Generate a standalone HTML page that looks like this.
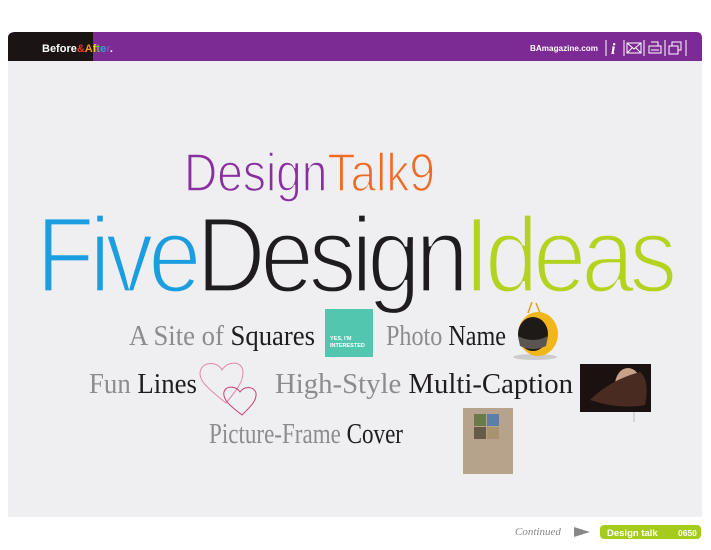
<!DOCTYPE html>
<html><head><meta charset="utf-8"><style>
html,body{margin:0;padding:0;background:#fff;width:711px;height:550px;overflow:hidden}
svg{display:block}
</style></head><body>
<svg width="711" height="550" viewBox="0 0 711 550" xmlns="http://www.w3.org/2000/svg">
<rect width="711" height="550" fill="#fff"/>
<!-- header -->
<path d="M16,32 H696 Q702,32 702,38 V61 H8 V38 Q8,32 16,32Z" fill="#7c2a94"/>
<path d="M16,32 H93 V61 H8 V38 Q8,32 16,32Z" fill="#1a1414"/>
<text x="42" y="52" font-family="Liberation Sans" font-weight="bold" font-size="11" fill="#fff">Before<tspan fill="#e23b2a">&amp;</tspan><tspan fill="#f39a1e">A</tspan><tspan fill="#e8d01f">f</tspan><tspan fill="#5cbf3a">t</tspan><tspan fill="#2fa0dc">e</tspan><tspan fill="#8c4bb0">r</tspan><tspan fill="#fff">.</tspan></text>
<text x="530" y="51" font-family="Liberation Sans" font-weight="bold" font-size="8.5" fill="#fff" textLength="68" lengthAdjust="spacingAndGlyphs">BAmagazine.com</text>
<g stroke="#fff" stroke-width="1" fill="none">
<line x1="606" y1="40" x2="606" y2="56"/>
<line x1="624" y1="40" x2="624" y2="56"/>
<rect x="627" y="43" width="14" height="10"/><path d="M627,43 L634,49 L641,43 M627,53 L632,48 M641,53 L636,48"/>
<line x1="644" y1="40" x2="644" y2="56"/>
<path d="M651,42 h7 v4 M649,46 h12 v7 h-12z M651,50 h8"/>
<line x1="665" y1="40" x2="665" y2="56"/>
<rect x="669" y="46" width="9" height="8"/><path d="M672,46 v-4 h9 v8 h-3"/>
<line x1="686" y1="40" x2="686" y2="56"/>
</g>
<text x="611" y="54" font-family="Liberation Serif" font-style="italic" font-weight="bold" font-size="16" fill="#fff">i</text>
<!-- content -->
<rect x="8" y="61" width="694" height="456" fill="#efeef1"/>
<text x="184" y="191" font-family="Liberation Sans" font-size="54" textLength="251" lengthAdjust="spacingAndGlyphs" fill="#8a2fa0" stroke="#efeef1" stroke-width="1.6">Design<tspan fill="#ef6a23">Talk9</tspan></text>
<text x="36" y="292" font-family="Liberation Sans" font-size="108" textLength="636" lengthAdjust="spacingAndGlyphs" fill="#1a9ee0" letter-spacing="-6" stroke="#efeef1" stroke-width="3.2">Five<tspan fill="#1e1c1e">Design</tspan><tspan fill="#b3d31f">Ideas</tspan></text>
<g font-family="Liberation Serif" font-size="29">
<text x="129" y="345" fill="#8d8b8f" textLength="186" lengthAdjust="spacingAndGlyphs">A Site of <tspan fill="#1e1c1e">Squares</tspan></text>
<text x="386" y="345" fill="#8d8b8f" textLength="120" lengthAdjust="spacingAndGlyphs">Photo <tspan fill="#1e1c1e">Name</tspan></text>
<text x="89" y="393" fill="#8d8b8f" textLength="108" lengthAdjust="spacingAndGlyphs">Fun <tspan fill="#1e1c1e">Lines</tspan></text>
<text x="275" y="393" fill="#8d8b8f" textLength="298" lengthAdjust="spacingAndGlyphs">High-Style <tspan fill="#1e1c1e">Multi-Caption</tspan></text>
<text x="209" y="443" fill="#8d8b8f" textLength="194" lengthAdjust="spacingAndGlyphs">Picture-Frame <tspan fill="#1e1c1e">Cover</tspan></text>
</g>
<!-- teal square -->
<rect x="325" y="309" width="48" height="48" fill="#52c6ae"/>
<text x="330" y="340" font-family="Liberation Sans" font-weight="bold" font-size="5.5" fill="#fff">YES, I'M</text>
<text x="330" y="347" font-family="Liberation Sans" font-weight="bold" font-size="5.5" fill="#fff">INTERESTED</text>
<!-- tv -->
<ellipse cx="535" cy="357" rx="22" ry="3" fill="#ccc"/>
<path d="M528,313 L532,302 M540,313 L536,303" stroke="#d9a615" stroke-width="1.5"/>
<ellipse cx="538" cy="334" rx="20" ry="22" fill="#f1b61a"/>
<ellipse cx="533" cy="334" rx="15" ry="17" fill="#1d1a17"/>
<path d="M518,336 Q533,344 548,336 L546,346 Q533,352 520,346Z" fill="#5a5550"/>
<!-- hearts -->
<g fill="none" stroke="#e08aa5" stroke-width="1">
<path d="M226,403 C210,390 196,380 201,369 C205,361 218,362 222,370 C228,360 243,361 243,372 C243,383 235,392 226,403Z"/>
<path d="M242,415 C233,408 222,400 224,392 C226,385 236,386 240,392 C244,386 254,386 256,393 C257,401 250,407 242,415Z" stroke="#c9406d"/>
</g>
<!-- photo -->
<rect x="580" y="364" width="71" height="48" fill="#1a1210"/>
<ellipse cx="628" cy="385" rx="13" ry="17" fill="#c9a189"/>
<path d="M590,400 Q610,380 640,372 Q650,380 645,405 Q620,410 590,400Z" fill="#4a2b22"/>
<line x1="634" y1="412" x2="634" y2="422" stroke="#bbb"/>
<!-- cover -->
<rect x="463" y="408" width="50" height="66" fill="#b7a38b"/>
<rect x="474" y="414" width="12" height="12" fill="#6b7a4a"/><rect x="487" y="414" width="12" height="12" fill="#5a80a8"/>
<rect x="474" y="427" width="12" height="12" fill="#665a48"/><rect x="487" y="427" width="12" height="12" fill="#a89270"/>
<!-- footer -->
<text x="515" y="535" font-family="Liberation Serif" font-style="italic" font-size="11" fill="#888">Continued</text>
<path d="M574,527 L590,532 L574,537Z" fill="#888"/>
<rect x="600" y="525" width="101" height="14" rx="4" fill="#a5cc1c"/>
<text x="607" y="536" font-family="Liberation Sans" font-weight="bold" font-size="9.5" fill="#fff">Design talk</text>
<text x="678" y="536" font-family="Liberation Sans" font-weight="bold" font-size="8.5" fill="#fff">0650</text>
</svg>
</body></html>
